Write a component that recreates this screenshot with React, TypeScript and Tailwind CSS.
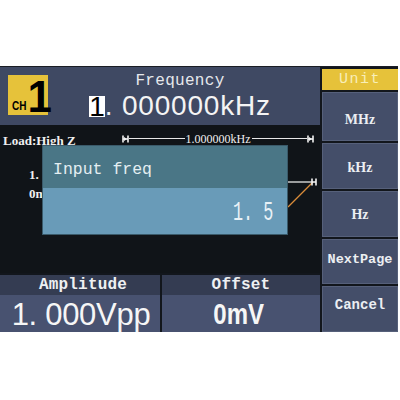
import React from "react";

const Marker = () => (
  <svg width="7" height="8" viewBox="0 0 7 8" className="block shrink-0">
    <path d="M1 0.5V7.5M6 0.5V7.5M1 4H6" stroke="#f2f2f2" strokeWidth="1.6" fill="none" />
    <path d="M2 2L5 4L2 6Z" fill="#f2f2f2" />
  </svg>
);

const SideBtn = ({ label, cls, h }: { label: string; cls: string; h: string }) => (
  <div className={`${h} flex items-center justify-center bg-[#444e69] border border-[#56607a]`}>
    <span className={cls}>{label}</span>
  </div>
);

export default function App() {
  return (
    <div className="w-[400px] h-[400px] bg-white overflow-hidden">
      <div className="h-[66px]" />
      <div className="w-[398px] h-[266px] bg-[#12161c] border-t border-[#1a1d24] flex">
        {/* Left panel */}
        <div className="w-[320px] flex flex-col">
          {/* Top bar */}
          <div className="h-[58px] bg-[#3f4963] flex pl-[8px] pt-[8px]">
            <div className="w-[40px] h-[40px] bg-[#e6c23a] flex items-end pl-[4px]">
              <span className="font-['Liberation_Sans',sans-serif] font-bold text-[10px] leading-none text-black mb-[4px] scale-y-[1.2] inline-block">CH</span>
              <span className="font-['Liberation_Sans',sans-serif] font-bold text-[44px] leading-none text-black ml-[1px] -mb-[4px] tracking-[-1px]">1</span>
            </div>
            <div className="flex-1 flex flex-col items-center pr-[8px] -mt-[4px]">
              <div className="font-['Liberation_Mono',monospace] text-[16px] leading-[20px] tracking-[0.3px] text-[#e6e8ec]">Frequency</div>
              <div className="font-['Liberation_Sans',sans-serif] text-[28px] leading-[30px] tracking-[0.8px] text-[#f4f4f4] flex items-center">
                <span className="inline-block bg-white text-black px-[0px] leading-[21px] tracking-normal mt-[1px]">1</span>
                <span>.&nbsp;000000kHz</span>
              </div>
            </div>
          </div>
          {/* Dark area */}
          <div className="h-[148px] bg-[#101418] relative">
            <div className="flex items-center h-[26px] pl-[3px] pt-[4px]">
              <span className="font-['Liberation_Serif',serif] font-bold text-[13px] text-[#f0f0f0] w-[119px] leading-none">Load:High Z</span>
              <div className="flex items-center w-[192px] -mt-[3px]">
                <Marker />
                <div className="flex-1 h-[1px] bg-[#e8e8e8]" />
                <span className="font-['Liberation_Serif',serif] text-[12px] leading-none text-[#f0f0f0] px-[1px]">1.000000kHz</span>
                <div className="flex-1 h-[1px] bg-[#e8e8e8]" />
                <Marker />
              </div>
            </div>
            <div className="pl-[29px] pt-[16px] flex flex-col gap-[4px] font-['Liberation_Serif',serif] font-bold text-[13px] leading-[15px] text-[#f0f0f0]">
              <span>1.</span>
              <span>0m</span>
            </div>
            {/* connector lines */}
            <svg className="absolute left-[286px] top-[50px]" width="32" height="36" viewBox="0 0 32 36">
              <path d="M2 7H26" stroke="#e8e8e8" strokeWidth="1.3" />
              <path d="M2 32L27 7" stroke="#d98c3a" strokeWidth="1.3" />
              <path d="M26 3.5V10.5M30 3.5V10.5M26 7H30" stroke="#f2f2f2" strokeWidth="1.6" />
            </svg>
            {/* Dialog */}
            <div className="absolute left-[42px] top-[20px] w-[246px] h-[90px] flex flex-col border border-[#3a5a6a]">
              <div className="h-[42px] bg-[#4a7686] flex items-center pl-[10px] pt-[6px]">
                <span className="font-['Liberation_Mono',monospace] text-[16.5px] text-[#e4eef2] leading-none">Input freq</span>
              </div>
              <div className="flex-1 bg-[#699bb8] flex items-center justify-end pr-[14px] pt-[4px]">
                <span className="font-['Liberation_Mono',monospace] text-[28px] leading-none text-[#e8f1f6] scale-x-[0.6] origin-right inline-block">1.&nbsp;5</span>
              </div>
            </div>
          </div>
          {/* Bottom */}
          <div className="flex-1 flex gap-[2px] pt-[2px]">
            <div className="w-[160px] flex flex-col">
              <div className="h-[20px] bg-[#343c52] flex items-center justify-center pl-[6px]">
                <span className="font-['Liberation_Mono',monospace] font-bold text-[16px] tracking-[0.2px] text-[#eef0f2] leading-none">Amplitude</span>
              </div>
              <div className="flex-1 bg-[#485270] flex items-center justify-center pl-[2px] pt-[1px]">
                <span className="font-['Liberation_Sans',sans-serif] text-[31px] leading-none tracking-[-0.3px] text-[#f6f6f6]">1.&nbsp;000Vpp</span>
              </div>
            </div>
            <div className="flex-1 flex flex-col">
              <div className="h-[20px] bg-[#343c52] flex items-center justify-center">
                <span className="font-['Liberation_Mono',monospace] font-bold text-[16px] tracking-[0.2px] text-[#eef0f2] leading-none">Offset</span>
              </div>
              <div className="flex-1 bg-[#485270] flex items-center justify-center pr-[4px] pt-[1px]">
                <span className="font-['Liberation_Sans',sans-serif] font-bold text-[30px] leading-none text-[#f6f6f6] scale-x-[0.8] inline-block">0mV</span>
              </div>
            </div>
          </div>
        </div>
        {/* Right column */}
        <div className="w-[76px] ml-[2px] flex flex-col gap-[2px] pt-[2px]">
          <div className="h-[21px] bg-[#e6c23a] flex items-center justify-center">
            <span className="font-['Liberation_Mono',monospace] text-[15px] tracking-[1.5px] text-[#f8eeb8] leading-none">Unit</span>
          </div>
          <SideBtn h="h-[49px] pt-[6px]" label="MHz" cls="font-['Liberation_Serif',serif] font-bold text-[14px] text-[#eceef2]" />
          <SideBtn h="h-[46px] pt-[3px]" label="kHz" cls="font-['Liberation_Serif',serif] font-bold text-[14px] text-[#eceef2]" />
          <SideBtn h="h-[46px] pt-[1px]" label="Hz" cls="font-['Liberation_Serif',serif] font-bold text-[14px] text-[#eceef2]" />
          <SideBtn h="h-[45px] pb-[3px]" label="NextPage" cls="font-['Liberation_Mono',monospace] font-bold text-[13.5px] text-[#eceef2]" />
          <SideBtn h="flex-1 pb-[7px]" label="Cancel" cls="font-['Liberation_Mono',monospace] font-bold text-[14px] text-[#eceef2]" />
        </div>
      </div>
    </div>
  );
}
